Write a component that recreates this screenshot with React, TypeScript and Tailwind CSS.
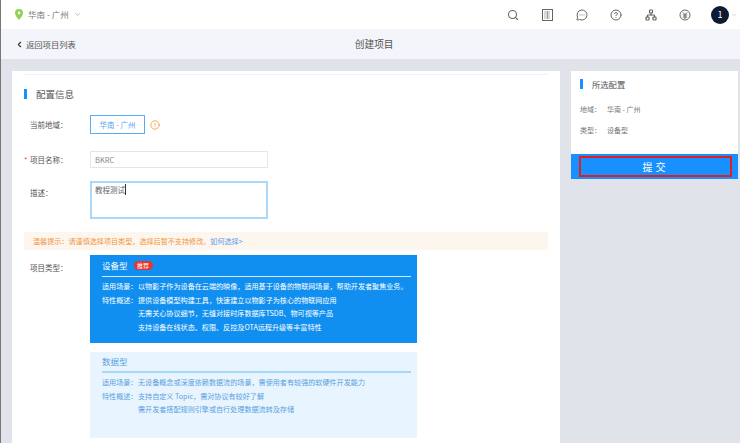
import { Search, ChevronDown, ChevronLeft, MessageCircleMore, CircleHelp, Network, CircleAlert } from 'lucide-react';

const font = { fontFamily: '"Noto Sans CJK SC", "Liberation Sans", sans-serif' };

const Header = () => (
  <header className="h-[30px] bg-white border-b border-[#e9ebf0] flex items-center pl-[14px] pr-[3px] shrink-0">
    <svg viewBox="0 0 8 11" className="h-[11px] w-[8px]">
      <path d="M4 0a4 4 0 0 1 4 4c0 2.6-2.6 5.4-4 7C2.6 9.4 0 6.600 0 4a4 4 0 0 1 4-4z" fill="#8fd14f" />
      <circle cx="4" cy="4" r="1.400" fill="#fff" />
    </svg>
    <span className="ml-[5px] text-[8.5px] text-[#777]">华南 - 广州</span>
    <ChevronDown className="ml-[5px] h-[7px] w-[7px] text-[#888]" />
    <div className="ml-auto flex items-center text-[#666]">
      <Search className="h-[12px] w-[12px]" strokeWidth={2.2} />
      <svg viewBox="0 0 11 12" className="ml-[23px] h-[12px] w-[11px]" fill="none" stroke="#666" strokeWidth="1">
        <rect x="0.500" y="0.500" width="10" height="11" />
        <path d="M2.500 3h6M2.500 5h6M2.500 7h6M2.500 9h6M5.500 2.500v7" strokeDasharray="1 1" />
      </svg>
      <MessageCircleMore className="ml-[23px] h-[12px] w-[12px]" />
      <CircleHelp className="ml-[22px] h-[12px] w-[12px]" />
      <Network className="ml-[23px] h-[12px] w-[12px]" strokeWidth={2.4} />
      <svg viewBox="0 0 12 12" className="ml-[22px] h-[12px] w-[12px]" fill="none" stroke="#666" strokeWidth="1">
        <circle cx="6" cy="6" r="5" />
        <path d="M4 3.500 6 5.500l2-2M3.800 6h4.400M3.800 8h4.400M6 5.500V10" />
      </svg>
      <div className="ml-[20px] h-[18px] w-[18px] rounded-full bg-[#0f1a33] text-white text-[9px] flex items-center justify-center">1</div>
      <ChevronDown className="ml-[2px] h-[6px] w-[6px] text-[#aaa]" />
    </div>
  </header>
);

const SubBar = () => (
  <div className="h-[30px] bg-[#f4f5fa] flex items-center pl-[14px] shrink-0 -mt-[1px]">
    <ChevronLeft className="h-[9px] w-[9px] text-[#333]" strokeWidth={3} />
    <span className="ml-[2px] text-[8.3px] text-[#555]">返回项目列表</span>
    <span className="ml-[279px] text-[9.700px] text-[#555]">创建项目</span>
  </div>
);

const SectionTitle = ({ children, small }: { children: string; small?: boolean }) => (
  <div className="flex items-center">
    <div className="h-[10px] w-[3px] bg-[#1890ff]" />
    <span className={`ml-[9px] text-[#555] ${small ? 'text-[8.3px]' : 'text-[9.5px]'}`}>{children}</span>
  </div>
);

const Label = ({ children, required }: { children: string; required?: boolean }) => (
  <div className="w-[66px] pl-[6px] shrink-0 relative text-[7.5px] text-[#555]">
    {required && <span className="absolute left-0 top-0 text-[#e33]">*</span>}
    {children}
  </div>
);

type CardProps = { title: string; badge?: string; lines: string[][]; dark?: boolean; className: string };

const TypeCard = ({ title, badge, lines, dark, className }: CardProps) => (
  <div className={`${className} w-[327px] pl-[12px] pr-[6px] ${dark ? 'bg-[#118ff0] text-white' : 'bg-[#e8f5fe] text-[#5a9fe0]'}`}>
    <div className={`flex items-center ${dark ? 'h-[22px] border-b border-[#d5eafc]' : 'h-[21px] border-b-2 border-[#a5d8fb]'}`}>
      <span className="text-[8.5px]">{title}</span>
      {badge && <span className="ml-[6px] h-[9px] w-[19px] rounded-full bg-[#e5352d] text-[6px] text-white flex items-center justify-center leading-none">{badge}</span>}
    </div>
    <div className="mt-[3px] text-[7.1px] leading-[13.5px]">
      {lines.map((line, i) => (
        <div key={i} className="flex whitespace-nowrap">
          <span className="w-[36px] shrink-0">{line[0]}</span>
          <span>{line[1]}</span>
        </div>
      ))}
    </div>
  </div>
);

export default function App() {
  return (
    <div style={font} className="h-[443px] w-[740px] overflow-hidden flex flex-col bg-[#e0e3ea] border-l border-[#777]">
      <Header />
      <SubBar />
      <main className="flex items-start pt-[12px] pl-[11px] pr-[2px] gap-[11px]">
        <section className="w-[548px] h-[372px] bg-white px-[12px] pt-[3px] shrink-0">
          <div className="border-t border-[#f0f1f4] pt-[12px]">
            <SectionTitle>配置信息</SectionTitle>
          </div>
          <div className="mt-[14px] flex items-center">
            <Label>当前地域：</Label>
            <div className="h-[19px] w-[55px] border border-[#5aabf5] text-[7.5px] text-[#5aa4ee] flex items-center justify-center">华南 - 广州</div>
            <CircleAlert className="ml-[5px] h-[10px] w-[10px] text-[#ee9a3a]" />
          </div>
          <div className="mt-[17px] flex items-center">
            <Label required>项目名称：</Label>
            <div className="h-[17px] w-[178px] border border-[#e5e6e8] px-[4px] text-[7.5px] text-[#888] flex items-center">BKRC</div>
          </div>
          <div className="mt-[13px] flex items-start">
            <div className="pt-[6px]"><Label>描述：</Label></div>
            <div className="h-[38px] w-[178px] border-2 border-[#a9d8fb] px-[3px] pt-[1px] text-[7.5px] text-[#666]">
              教程测试<span className="border-r border-[#333]" />
            </div>
          </div>
          <div className="mt-[13px] h-[18px] bg-[#fdf6ef] flex items-center pl-[9px] text-[7.1px] text-[#f0953c]">
            温馨提示：请谨慎选择项目类型，选择后暂不支持修改。<span className="text-[#5b9be6]">如何选择&gt;</span>
          </div>
          <div className="mt-[5px] flex items-start">
            <div className="pt-[7px]"><Label>项目类型：</Label></div>
            <div>
              <TypeCard
                dark
                className="h-[88px]"
                title="设备型"
                badge="推荐"
                lines={[
                  ['适用场景：', '以物影子作为设备在云端的映像，适用基于设备的物联网场景，帮助开发者聚焦业务。'],
                  ['特性概述：', '提供设备模型构建工具，快速建立以物影子为核心的物联网应用'],
                  ['', '无需关心协议细节，无缝对接时序数据库TSDB、物可视等产品'],
                  ['', '支持设备在线状态、权限、反控及OTA远程升级等丰富特性'],
                ]}
              />
              <TypeCard
                className="mt-[9px] h-[86px]"
                title="数据型"
                lines={[
                  ['适用场景：', '无设备概念或深度依赖数据流的场景，需使用者有较强的软硬件开发能力'],
                  ['特性概述：', '支持自定义 Topic，需对协议有较好了解'],
                  ['', '需开发者搭配规则引擎或自行处理数据流转及存储'],
                ]}
              />
            </div>
          </div>
        </section>
        <aside className="w-[167px] h-[108px] bg-white flex flex-col shrink-0">
          <div className="pl-[9px] pt-[7px]">
            <SectionTitle small>所选配置</SectionTitle>
            <div className="mt-[14px] flex text-[7px] text-[#777]"><span className="w-[27px]">地域：</span><span>华南 - 广州</span></div>
            <div className="mt-[10px] flex text-[7px] text-[#777]"><span className="w-[27px]">类型：</span><span>设备型</span></div>
          </div>
          <div className="mt-auto h-[25px] bg-[#1890ff] flex p-[2px] pl-[8px] pr-[6px]">
            <button className="h-full w-full border-2 border-[#e02020] text-white text-[10px] tracking-[3px]">提交</button>
          </div>
        </aside>
      </main>
    </div>
  );
}
